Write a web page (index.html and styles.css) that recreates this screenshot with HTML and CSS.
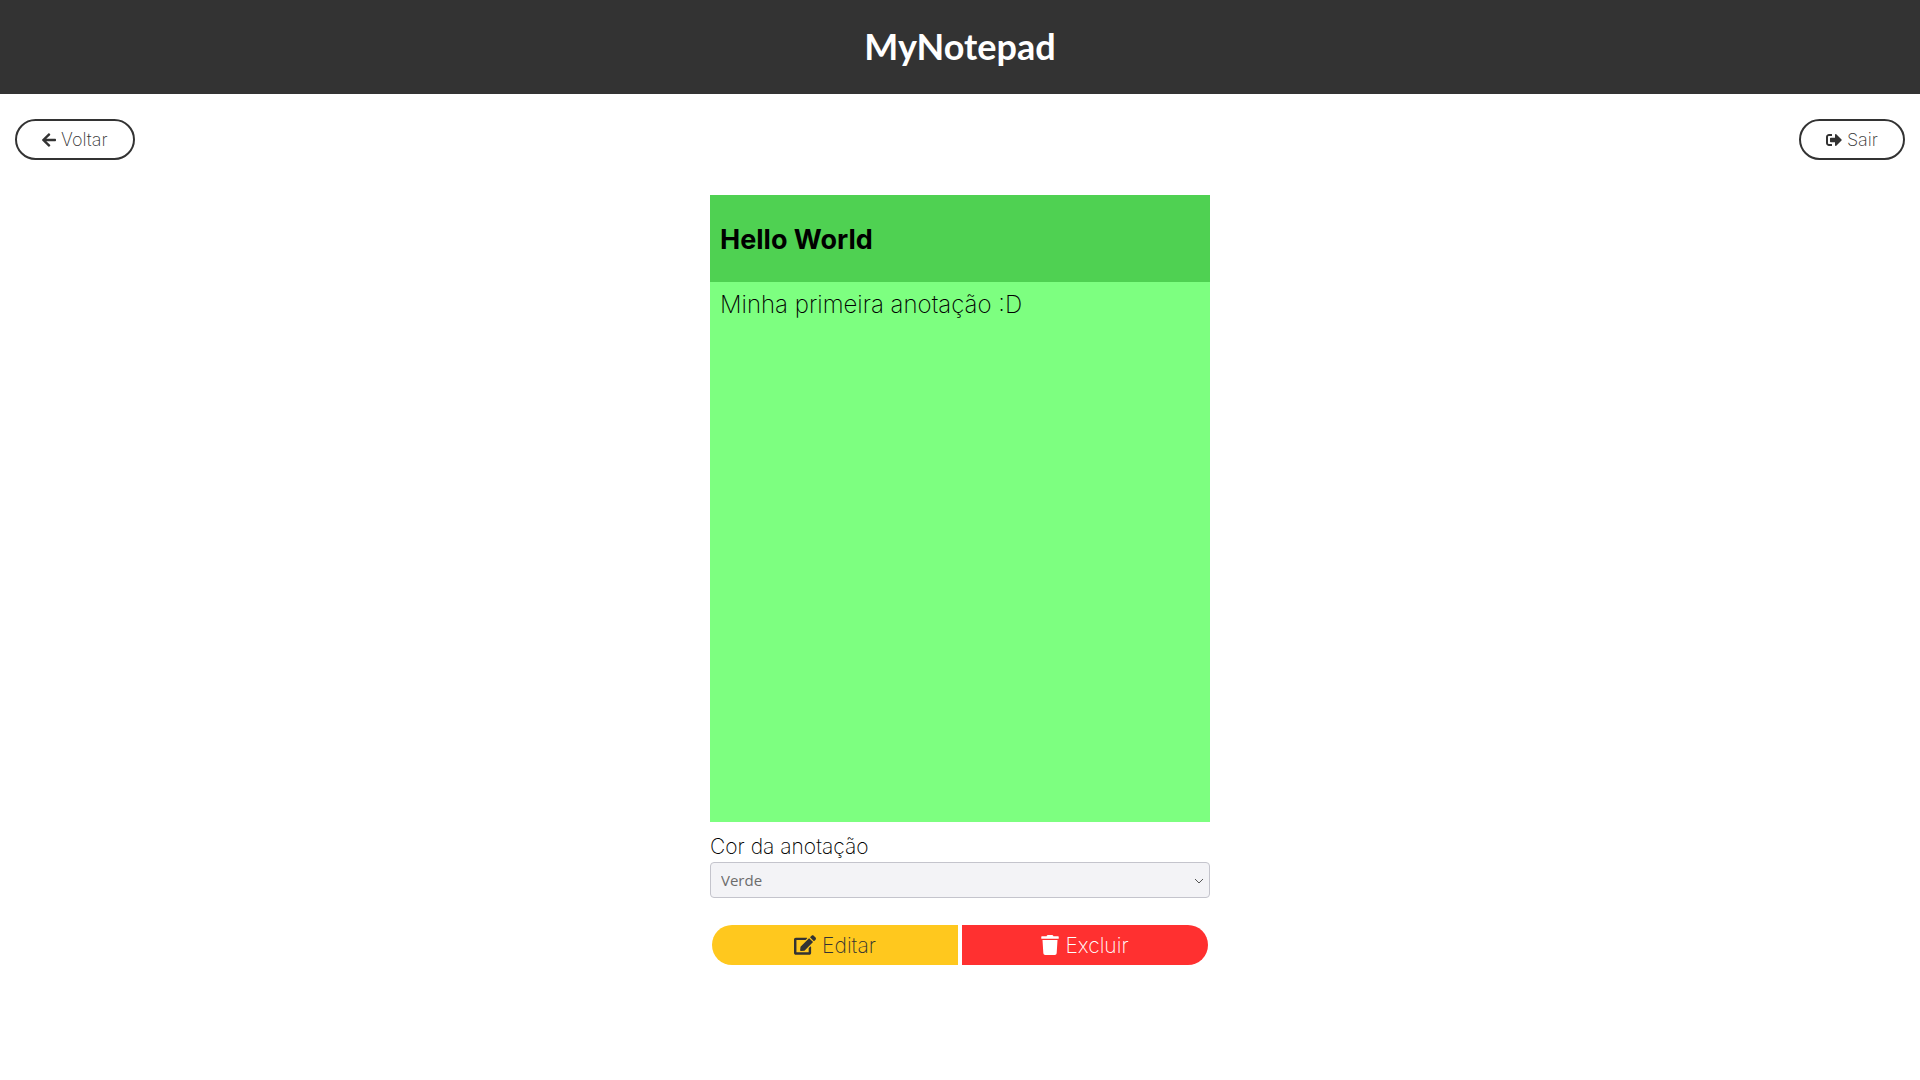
FILE: index.html
```html
<!DOCTYPE html>
<html lang="pt-BR">
<head>
  <meta charset="utf-8">
  <meta name="viewport" content="width=device-width, initial-scale=1">
  <title>MyNotepad</title>
  <link rel="stylesheet" href="styles.css">
</head>
<body>
  <header class="header"><h1 class="logo">MyNotepad</h1></header>
  <nav class="toolbar">
    <button class="pill" type="button">
      <svg class="icon" viewBox="0 0 448 512" width="14" height="16" aria-hidden="true"><path d="M257.5 445.1l-22.2 22.2c-9.4 9.4-24.6 9.4-33.9 0L7 273c-9.4-9.4-9.4-24.6 0-33.9L201.4 44.7c9.4-9.4 24.6-9.4 33.9 0l22.2 22.2c9.5 9.5 9.3 25-.4 34.3L136.6 216H424c13.3 0 24 10.7 24 24v32c0 13.3-10.7 24-24 24H136.6l120.5 114.8c9.8 9.3 10 24.8.4 34.3z"/></svg>
      <span>Voltar</span>
    </button>
    <button class="pill" type="button">
      <svg class="icon" viewBox="0 0 512 512" width="16" height="16" aria-hidden="true"><path d="M497 273L329 441c-15 15-41 4.500-41-17v-96H152c-13.300 0-24-10.700-24-24v-96c0-13.300 10.700-24 24-24h136V88c0-21.400 25.900-32 41-17l168 168c9.300 9.400 9.300 24.600 0 34zM192 436v-40c0-6.600-5.400-12-12-12H96c-17.700 0-32-14.300-32-32V160c0-17.700 14.300-32 32-32h84c6.600 0 12-5.400 12-12V76c0-6.600-5.400-12-12-12H96c-53 0-96 43-96 96v192c0 53 43 96 96 96h84c6.600 0 12-5.400 12-12z"/></svg>
      <span>Sair</span>
    </button>
  </nav>
  <main class="content">
    <article class="note">
      <h2 class="note-title">Hello World</h2>
      <p class="note-text">Minha primeira anotação :D</p>
    </article>
    <label class="label" for="color">Cor da anotação</label>
    <div class="select-wrap">
      <select class="select" id="color"><option>Verde</option></select>
      <svg class="chevron" viewBox="0 0 10 6" width="10" height="6" aria-hidden="true"><path d="M1 1l4 4 4-4"/></svg>
    </div>
    <div class="actions">
      <button class="action edit" type="button">
        <svg class="icon" viewBox="0 0 576 512" width="22" height="20" aria-hidden="true"><path d="M402.600 83.200l90.200 90.200c3.800 3.800 3.800 10 0 13.800L274.400 405.600l-92.800 10.300c-12.400 1.400-22.900-9.100-21.500-21.500l10.300-92.800L388.800 83.200c3.800-3.800 10-3.800 13.800 0zm162-22.900l-48.800-48.800c-15.200-15.200-39.900-15.200-55.200 0l-35.400 35.400c-3.800 3.800-3.800 10 0 13.800l90.200 90.200c3.800 3.800 10 3.800 13.800 0l35.400-35.400c15.200-15.300 15.200-40 0-55.200zM384 346.200V448H64V128h229.800c3.200 0 6.200-1.300 8.500-3.500l40-40c7.600-7.600 2.200-20.500-8.500-20.500H48C21.500 64 0 85.500 0 112v352c0 26.500 21.500 48 48 48h352c26.500 0 48-21.500 48-48V306.200c0-10.700-12.900-16-20.500-8.500l-40 40c-2.200 2.300-3.500 5.300-3.500 8.500z"/></svg>
        <span>Editar</span>
      </button>
      <button class="action delete" type="button">
        <svg class="icon" viewBox="0 0 448 512" width="18" height="20" aria-hidden="true"><path d="M432 32H312l-9.400-18.700A24 24 0 0 0 281.100 0H166.800a23.720 23.720 0 0 0-21.400 13.300L136 32H16A16 16 0 0 0 0 48v32a16 16 0 0 0 16 16h416a16 16 0 0 0 16-16V48a16 16 0 0 0-16-16zM53.200 467a48 48 0 0 0 47.900 45h245.800a48 48 0 0 0 47.900-45L416 128H32z"/></svg>
        <span>Excluir</span>
      </button>
    </div>
  </main>
</body>
</html>
```
FILE: styles.css
```css
* { box-sizing: border-box; }
body {
  margin: 0;
  background: #fff;
  color: #000;
  font-family: Inter, "Open Sans", sans-serif;
  font-weight: 200;
}
button { font: inherit; cursor: pointer; }
.icon { fill: currentColor; flex: none; }
.header {
  display: flex;
  justify-content: center;
  padding: 23px 16px 25px;
  background: #333;
  color: #fff;
}
.logo {
  margin: 0;
  font-family: Lato, sans-serif;
  font-size: 36px;
  line-height: 46px;
  font-weight: 700;
}
.toolbar {
  display: flex;
  justify-content: space-between;
  padding: 25px 15px 35px;
}
.pill {
  display: flex;
  align-items: center;
  gap: 5px;
  height: 41px;
  padding: 0 25px;
  border: 2px solid #333;
  border-radius: 24px;
  background: #fff;
  color: #333;
  font-size: 18px;
}
.content {
  width: 100%;
  max-width: 500px;
  margin: 0 auto;
}
.note {
  min-height: 627px;
  background: #7dff80;
}
.note-title {
  margin: 0;
  padding: 29px 10px 27px;
  background: #4fd152;
  font-size: 27px;
  line-height: 31px;
  font-weight: 700;
}
.note-text {
  margin: 0;
  padding: 9px 10px;
  font-size: 24px;
  line-height: 28px;
}
.label {
  display: block;
  padding: 13px 0 3px;
  font-size: 21px;
  line-height: 24px;
}
.select-wrap { position: relative; }
.select {
  display: block;
  width: 100%;
  height: 36px;
  padding: 0 10px;
  appearance: none;
  border: 1px solid #c4c4cc;
  border-radius: 4px;
  background: #f3f3f6;
  color: #6c6c6c;
  font-family: "Open Sans", sans-serif;
  font-size: 15px;
  font-weight: 400;
}
.chevron {
  position: absolute;
  right: 6px;
  top: 16px;
  fill: none;
  stroke: #555;
  stroke-width: 1;
  pointer-events: none;
}
.actions {
  display: flex;
  gap: 4px;
  padding: 27px 2px;
}
.action {
  display: flex;
  flex: 1;
  justify-content: center;
  align-items: center;
  gap: 6px;
  height: 40px;
  padding: 0;
  border: 0;
  font-size: 21px;
}
.edit {
  border-radius: 20px 0 0 20px;
  background: #ffc81e;
  color: #333;
}
.delete {
  border-radius: 0 20px 20px 0;
  background: #ff3030;
  color: #fff;
}
```
